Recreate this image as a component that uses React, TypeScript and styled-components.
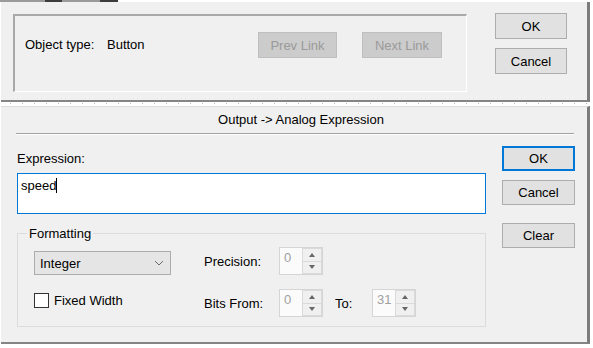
import React from 'react'
import styled, { createGlobalStyle } from 'styled-components'

const GlobalStyle = createGlobalStyle`
  body {
    margin: 0;
    background: #ffffff;
    font-family: "Liberation Sans", Arial, sans-serif;
    font-size: 13px;
    color: #000;
  }
`

const Screen = styled.div`
  width: 593px;
  height: 348px;
  background: #ffffff;
  overflow: hidden;
`

// leftover of the window frame above, only a sliver is visible
const FrameSliver = styled.div`
  width: 118px;
  height: 2px;
  background: linear-gradient(to right, #9a9a9a 0 45px, #3c3c3c 45px 62px, #9a9a9a 62px 100px, #3c3c3c 100px 118px);
`

const Panel = styled.div<{ $height: number }>`
  box-sizing: border-box;
  margin-left: 1px;
  width: 589px;
  height: ${p => p.$height}px;
  background: #f0f0f0;
  border-right: 3px solid #7c7c7c;
  border-bottom: 2px solid #858585;
`

const TopPanel = styled(Panel)`
  display: flex;
  align-items: flex-start;
  gap: 28px;
  padding: 11px 0 0 12px;
`

const InfoGroup = styled.div`
  box-sizing: border-box;
  margin-top: 1px;
  width: 454px;
  height: 78px;
  display: flex;
  align-items: flex-start;
  padding: 16px 0 0 10px;
  border-style: solid;
  border-width: 2px 1px 1px 2px;
  border-color: #a9a9a9 #ffffff #ffffff #a9a9a9;
`

const InfoLabel = styled.span<{ $width: number }>`
  width: ${p => p.$width}px;
  line-height: 26px;
  flex-shrink: 0;
`

const LinkButtons = styled.div`
  display: flex;
  gap: 25px;
`

const ButtonColumn = styled.div`
  display: flex;
  flex-direction: column;
  gap: 9px;
`

const DlgButton = styled.button<{ $width: number; $height?: number; $default?: boolean; $disabled?: boolean; $top?: number }>`
  box-sizing: border-box;
  width: ${p => p.$width}px;
  height: ${p => p.$height ?? 26}px;
  margin: ${p => p.$top ?? 0}px 0 0;
  padding: 0;
  font-family: inherit;
  font-size: 13px;
  color: ${p => (p.$disabled ? '#9a9a9a' : '#000')};
  background: ${p => (p.$disabled ? '#cccccc' : '#e1e1e1')};
  border: ${p => (p.$default ? '2px solid #0078d7' : p.$disabled ? '1px solid #bfbfbf' : '1px solid #adadad')};
`

const Divider = styled.div`
  height: 4px;
  background-color: #ffffff;
  background-image: repeating-linear-gradient(to right, #b8b8b8 0 1px, transparent 1px 12px);
  background-size: 100% 1px;
  background-position: 10px 1px;
  background-repeat: no-repeat;
`

const BottomPanel = styled(Panel)`
  border-top: 1px solid #dcdcdc;
`

const Title = styled.div`
  height: 26px;
  line-height: 26px;
  text-align: center;
  padding-left: 14px;
`

const Rule = styled.div`
  margin: 0 13px 0 15px;
  border-top: 1px solid #a0a0a0;
  border-bottom: 1px solid #ffffff;
`

const Body = styled.div`
  display: flex;
  align-items: flex-start;
  gap: 16px;
  padding-left: 16px;
`

const MainColumn = styled.div`
  width: 469px;
  display: flex;
  flex-direction: column;
`

const FieldLabel = styled.div`
  margin-top: 16px;
  line-height: 15px;
`

const ExpressionBox = styled.div`
  box-sizing: border-box;
  margin-top: 7px;
  height: 41px;
  background: #ffffff;
  border: 1px solid #0078d7;
  padding: 4px 3px;
  line-height: 15px;
`

const Caret = styled.span`
  display: inline-block;
  width: 1px;
  height: 15px;
  background: #000;
  vertical-align: top;
`

const FormatGroup = styled.fieldset`
  box-sizing: border-box;
  margin: 12px 0 0;
  padding: 0 0 9px 16px;
  border: 1px solid #dcdcdc;
  min-width: 0;
`

const GroupLegend = styled.legend`
  margin-left: -7px;
  padding: 0 2px;
  line-height: 15px;
`

const FormatGrid = styled.div`
  margin-top: 6px;
  display: grid;
  grid-template-columns: 170px 75px 44px 49px 44px;
  grid-template-rows: 28px 28px;
  row-gap: 14px;
  align-items: center;
`

const Select = styled.div`
  box-sizing: border-box;
  align-self: end;
  width: 137px;
  height: 24px;
  display: flex;
  align-items: center;
  justify-content: space-between;
  padding: 0 6px 0 5px;
  background: #e5e5e5;
  border: 1px solid #acacac;
`

const CheckRow = styled.label`
  display: flex;
  align-items: center;
  gap: 5px;
  align-self: start;
  margin-top: 4px;
`

const CheckBox = styled.span`
  box-sizing: border-box;
  width: 15px;
  height: 15px;
  background: #ffffff;
  border: 1px solid #333333;
`

const GridText = styled.span<{ $indent?: number }>`
  padding-left: ${p => p.$indent ?? 0}px;
`

const Spin = styled.div`
  box-sizing: border-box;
  width: 44px;
  height: 28px;
  display: flex;
  background: #fbfbfb;
  border: 1px solid #d5d5d5;
`

const SpinValue = styled.span`
  flex: 1;
  padding: 2px 0 0 4px;
  color: #a0a0a0;
  line-height: 15px;
`

const SpinArrows = styled.div`
  width: 20px;
  display: flex;
  flex-direction: column;
`

const SpinHalf = styled.div<{ $down?: boolean }>`
  flex: 1;
  display: flex;
  align-items: center;
  justify-content: center;
  background: #f0f0f0;
  border: 1px solid #dadada;
  ${p => (p.$down ? 'border-top: none;' : '')}

  &::after {
    content: '';
    width: 0;
    height: 0;
    border-left: 3.5px solid transparent;
    border-right: 3.5px solid transparent;
    ${p => (p.$down ? 'border-top: 4px solid #666;' : 'border-bottom: 4px solid #666;')}
  }
`

const SideColumn = styled.div`
  display: flex;
  flex-direction: column;
  margin-top: 11px;
`

const Chevron = () => (
  <svg width="10" height="6" viewBox="0 0 10 6">
    <path d="M1 1 L5 5 L9 1" fill="none" stroke="#6d6d6d" strokeWidth="1" />
  </svg>
)

const Spinner: React.FC<{ value: string }> = ({ value }) => (
  <Spin>
    <SpinValue>{value}</SpinValue>
    <SpinArrows>
      <SpinHalf />
      <SpinHalf $down />
    </SpinArrows>
  </Spin>
)

const App: React.FC = () => {
  return (
    <Screen>
      <GlobalStyle />
      <FrameSliver />
      <TopPanel $height={100}>
        <InfoGroup>
          <InfoLabel $width={82}>Object type:</InfoLabel>
          <InfoLabel $width={151}>Button</InfoLabel>
          <LinkButtons>
            <DlgButton $width={79} $disabled>Prev Link</DlgButton>
            <DlgButton $width={80} $disabled>Next Link</DlgButton>
          </LinkButtons>
        </InfoGroup>
        <ButtonColumn>
          <DlgButton $width={72}>OK</DlgButton>
          <DlgButton $width={72}>Cancel</DlgButton>
        </ButtonColumn>
      </TopPanel>
      <Divider />
      <BottomPanel $height={238}>
        <Title>Output -&gt; Analog Expression</Title>
        <Rule />
        <Body>
          <MainColumn>
            <FieldLabel>Expression:</FieldLabel>
            <ExpressionBox>
              speed<Caret />
            </ExpressionBox>
            <FormatGroup>
              <GroupLegend>Formatting</GroupLegend>
              <FormatGrid>
                <Select>
                  <span>Integer</span>
                  <Chevron />
                </Select>
                <GridText>Precision:</GridText>
                <Spinner value="0" />
                <span />
                <span />
                <CheckRow>
                  <CheckBox />
                  Fixed Width
                </CheckRow>
                <GridText>Bits From:</GridText>
                <Spinner value="0" />
                <GridText $indent={12}>To:</GridText>
                <Spinner value="31" />
              </FormatGrid>
            </FormatGroup>
          </MainColumn>
          <SideColumn>
            <DlgButton $width={73} $height={25} $default>OK</DlgButton>
            <DlgButton $width={73} $height={25} $top={9}>Cancel</DlgButton>
            <DlgButton $width={73} $height={25} $top={18}>Clear</DlgButton>
          </SideColumn>
        </Body>
      </BottomPanel>
    </Screen>
  )
}

export default App
